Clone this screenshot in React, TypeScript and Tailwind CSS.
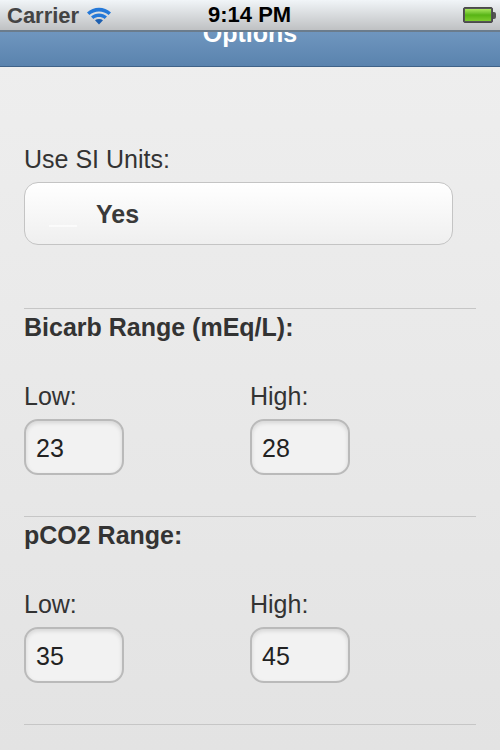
const Field = ({ label, value }: { label: string; value: string }) => (
  <div className="w-[226.5px]">
    <p className="text-[25px] leading-[28px] text-[#333]">{label}</p>
    <div className="mt-[9px] w-[100px] h-[56px] rounded-[14px] border-2 border-[#bababa] bg-[#f2f2f2] shadow-[inset_0_2px_4px_rgba(0,0,0,0.12)] flex items-center pl-[10px] pt-[3px] text-[25px] text-[#222]">
      {value}
    </div>
  </div>
);

const Range = ({ title, low, high }: { title: string; low: string; high: string }) => (
  <div className="border-t border-[#c6c6c6] h-[208px] pt-[4px]">
    <h2 className="text-[25px] leading-[28px] font-bold text-[#333]">{title}</h2>
    <div className="flex mt-[41px]">
      <Field label="Low:" value={low} />
      <Field label="High:" value={high} />
    </div>
  </div>
);

const Wifi = () => (
  <svg width="26" height="20" viewBox="0 0 26 20" className="ml-[7px]">
    <path d="M1 7.5C7.5 1.2 18.5 1.2 25 7.5L22.6 10C17.5 5.2 8.5 5.2 3.4 10Z" fill="#2478d8" />
    <path d="M5 11.5C9.5 7.6 16.5 7.6 21 11.5L18.6 14C15.5 11.4 10.5 11.4 7.4 14Z" fill="#2478d8" />
    <path d="M9 15.3C11.3 13.6 14.7 13.6 17 15.3L13 19.5Z" fill="#1d5fb0" />
  </svg>
);

const Battery = () => (
  <div className="flex items-center">
    <div className="w-[30px] h-[16px] rounded-[2px] border border-[#4a4a4a] bg-[#555] p-px">
      <div className="h-full w-full bg-gradient-to-b from-[#a8e85a] via-[#58b414] to-[#7ccc2c]" />
    </div>
    <div className="w-[3px] h-[7px] bg-[#555] rounded-r-[2px]" />
  </div>
);

export default function App() {
  return (
    <div className="w-[500px] h-[750px] overflow-hidden font-['Liberation_Sans',Arial,sans-serif] bg-gradient-to-b from-[#efefef] to-[#e3e3e3]">
      <div className="relative h-[32px] flex items-center justify-between pl-[7px] pr-[4px] bg-gradient-to-b from-[#f1f5f8] to-[#bfc1c3] border-b-2 border-[#6b7c8c]">
        <div className="flex items-center">
          <span className="text-[22px] font-bold text-[#444]">Carrier</span>
          <Wifi />
        </div>
        <span className="absolute left-[208px] top-[1px] text-[22px] leading-[28px] font-bold text-black">9:14 PM</span>
        <Battery />
      </div>
      <div className="h-[35px] overflow-hidden bg-gradient-to-b from-[#6f96bf] to-[#5a83ae] border-b border-[#3f6288] flex justify-center">
        <span className="text-[25px] leading-[28px] font-bold text-white -mt-[13px]">Options</span>
      </div>
      <div className="px-[24px]">
        <div className="h-[241px] pt-[78px]">
          <p className="text-[25px] leading-[28px] text-[#333]">Use SI Units:</p>
          <div className="relative mt-[9px] w-[429px] h-[63px] rounded-[14px] border border-[#c4c4c4] bg-gradient-to-b from-white to-[#efefef] flex items-center pl-[71px] pt-[3px] text-[25px] font-bold text-[#3a3a3a]">
            <div className="absolute left-[24px] top-[42px] w-[28px] h-[2px] bg-white/60" />
            Yes
          </div>
        </div>
        <Range title="Bicarb Range (mEq/L):" low="23" high="28" />
        <Range title="pCO2 Range:" low="35" high="45" />
        <div className="border-t border-[#c6c6c6]" />
      </div>
    </div>
  );
}
